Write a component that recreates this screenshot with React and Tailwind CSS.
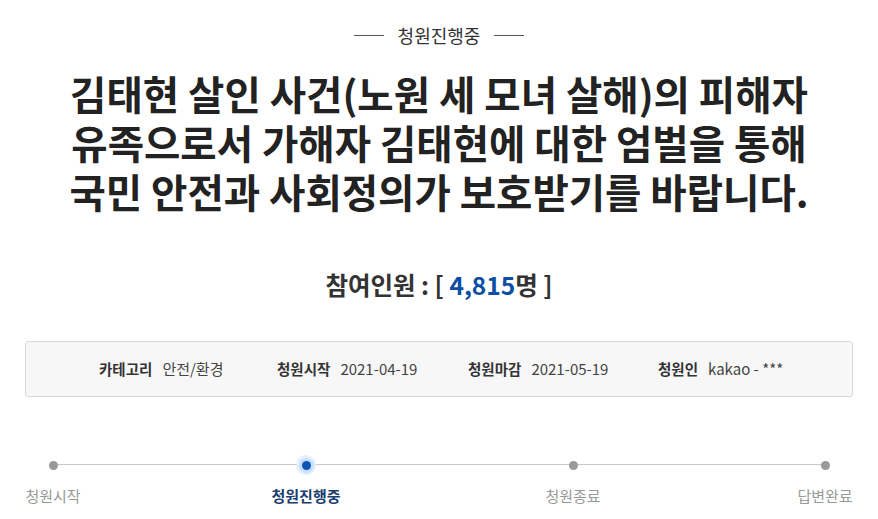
import React from "react";

const font = { fontFamily: '"Noto Sans CJK KR", "Noto Sans", sans-serif' };

const steps = [
    { label: "청원시작", active: false, cls: "w-[56px]" },
    { label: "청원진행중", active: true, cls: "w-[80px] ml-[185px]" },
    { label: "청원종료", active: false, cls: "w-[80px] ml-[187px]" },
    { label: "답변완료", active: false, cls: "w-[56px] ml-[184px]" },
];

const info = [
    { name: "카테고리", value: "안전/환경", cls: "w-[178px]" },
    { name: "청원시작", value: "2021-04-19", cls: "w-[191px]" },
    { name: "청원마감", value: "2021-05-19", cls: "w-[190px]" },
    { name: "청원인", value: "kakao - ***", cls: "" },
];

export default function App() {
    return (
        <div className="w-[878px] h-[519px] bg-white overflow-hidden" style={font}>
            <div className="px-[25px] pt-[22px]">
                {/* 상태 */}
                <div className="flex items-center justify-center gap-[14px] text-[18px] text-[#333] leading-[26px]">
                    <span className="w-[30px] h-px bg-[#555]"></span>
                    <span>청원진행중</span>
                    <span className="w-[30px] h-px bg-[#555]"></span>
                </div>

                {/* 제목 */}
                <h1 className="mt-[20px] text-center text-[39.5px] font-bold leading-[49px] text-[#222]">
                    김태현 살인 사건(노원 세 모녀 살해)의 피해자
                    <br />
                    유족으로서 가해자 김태현에 대한 엄벌을 통해
                    <br />
                    국민 안전과 사회정의가 보호받기를 바랍니다.
                </h1>

                {/* 참여인원 */}
                <div className="mt-[54px] text-center text-[24.5px] font-bold text-[#333] leading-[32px]">
                    참여인원 : [ <span className="text-[#0b4ea2]">4,815</span>명 ]
                </div>

                {/* 정보 */}
                <div className="mt-[40px] h-[56px] border border-[#d9d9d9] rounded-[3px] bg-[#f7f7f7] flex items-center text-[14.5px] text-[#333] pl-[73px]">
                    {info.map((item) => (
                        <div key={item.name} className={`flex items-center ${item.cls}`}>
                            <span className="font-bold mr-[10px]">{item.name}</span>
                            <span className="text-[#444] text-[15px]">{item.value}</span>
                        </div>
                    ))}
                </div>

                {/* 진행 단계 */}
                <div className="relative mt-[58px]">
                    <div className="absolute left-[25px] right-[27px] top-[9px] h-px bg-[#c8c8c8]"></div>
                    <div className="relative flex">
                        {steps.map((s) => (
                            <div key={s.label} className={`flex flex-col items-center shrink-0 ${s.cls}`}>
                                <div className="h-[20px] flex items-center justify-center">
                                    {s.active ? (
                                        <span className="w-[20px] h-[20px] rounded-full bg-[#e3efff] flex items-center justify-center">
                                            <span className="w-[15px] h-[15px] rounded-full bg-[#c9e0fd] flex items-center justify-center">
                                                <span className="w-[9px] h-[9px] rounded-full bg-[#0c56b4]"></span>
                                            </span>
                                        </span>
                                    ) : (
                                        <span className="w-[9px] h-[9px] rounded-full bg-[#999]"></span>
                                    )}
                                </div>
                                <span
                                    className={`mt-[10px] text-[15px] leading-[22px] whitespace-nowrap ${
                                        s.active ? "font-bold text-[#1b3e6f]" : "text-[#999]"
                                    }`}
                                >
                                    {s.label}
                                </span>
                            </div>
                        ))}
                    </div>
                </div>
            </div>
        </div>
    );
}
